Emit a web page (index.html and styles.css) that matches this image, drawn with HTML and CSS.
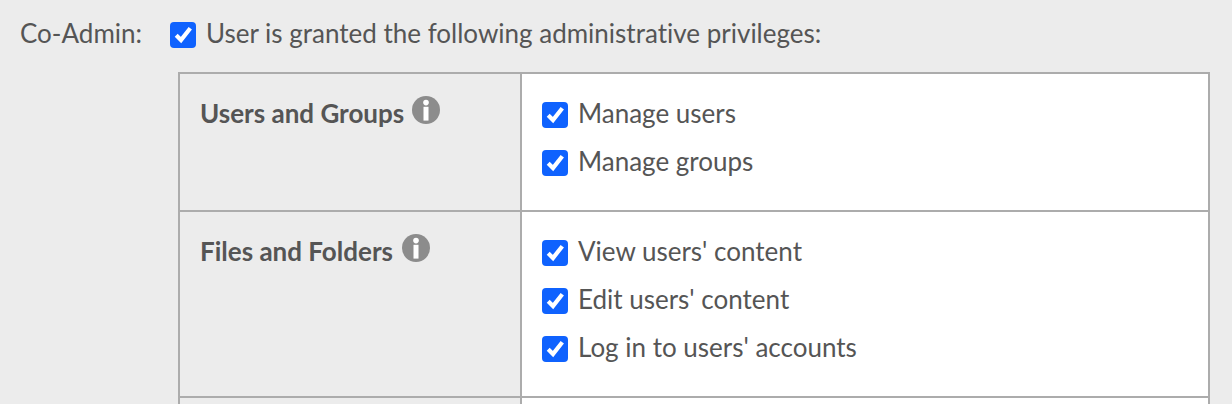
FILE: index.html
```html
<!DOCTYPE html>
<html lang="en">
<head>
<meta charset="utf-8">
<title>Co-Admin</title>
<link rel="stylesheet" href="styles.css">
</head>
<body>
<svg class="defs" width="0" height="0" aria-hidden="true">
  <symbol id="check" viewBox="0 0 26 26">
    <rect width="26" height="26" rx="4" fill="#0f62fe"/>
    <path d="M6.2 13.3 L11 18 L20.3 6.2" fill="none" stroke="#fff" stroke-width="4.2"/>
  </symbol>
  <symbol id="info" viewBox="0 0 28 28">
    <circle cx="14" cy="14" r="14" fill="#8c8c8c"/>
    <circle cx="14" cy="6.6" r="2.8" fill="#fff"/>
    <rect x="11.5" y="10.8" width="5" height="13.8" fill="#fff"/>
  </symbol>
</svg>
<main class="page">
  <div class="top">
    <span class="top-label">Co-Admin:</span>
    <label class="check"><svg class="box"><use href="#check"/></svg>User is granted the following administrative privileges:</label>
  </div>
  <div class="perm">
    <section class="row row-users">
      <div class="head"><span>Users and Groups</span><svg class="info"><use href="#info"/></svg></div>
      <div class="opts">
        <label class="check"><svg class="box"><use href="#check"/></svg>Manage users</label>
        <label class="check"><svg class="box"><use href="#check"/></svg>Manage groups</label>
      </div>
    </section>
    <section class="row row-files">
      <div class="head"><span>Files and Folders</span><svg class="info"><use href="#info"/></svg></div>
      <div class="opts">
        <label class="check"><svg class="box"><use href="#check"/></svg>View users' content</label>
        <label class="check"><svg class="box"><use href="#check"/></svg>Edit users' content</label>
        <label class="check"><svg class="box"><use href="#check"/></svg>Log in to users' accounts</label>
      </div>
    </section>
    <section class="row row-more">
      <div class="head"></div>
      <div class="opts"></div>
    </section>
  </div>
</main>
</body>
</html>
```
FILE: styles.css
```css
html, body {
  margin: 0;
  height: 100%;
  overflow: hidden;
  background: #ececec;
}
body {
  font-family: Lato, sans-serif;
  font-size: 26px;
  line-height: 32px;
  color: #555;
  font-variant-ligatures: none;
}
.defs { display: block; height: 0; }
.page { padding: 17px 21px 0 20px; }
.top { display: flex; height: 32px; align-items: center; }
.top-label { width: 150px; flex: none; }
.check { display: flex; align-items: center; gap: 10px; height: 32px; }
.box { width: 26px; height: 26px; flex: none; margin-top: 4px; }
.perm {
  margin: 23px 0 0 158px;
  border: 2px solid #acacac;
  border-bottom: 0;
  width: 1028px;
}
.row { display: flex; border-bottom: 2px solid #acacac; }
.row-users { height: 136px; }
.row-files { height: 184px; }
.row-more { height: 6px; border-bottom: 0; }
.head {
  flex: none;
  padding: 23px 0 0 20px;
  box-sizing: border-box;
  border-right: 2px solid #acacac;
  font-weight: 700;
  display: flex;
  align-items: flex-start;
  gap: 8px;
  width: 342px;
}
.row-files .head { gap: 9px; }
.row-more .head { padding: 0; }
.info { width: 28px; height: 28px; flex: none; margin-top: -1px; }
.opts {
  flex: 1;
  background: #fff;
  padding: 23px 20px 0 20px;
  display: flex;
  flex-direction: column;
  gap: 16px;
}
.row-more .opts { padding: 0; }
```
